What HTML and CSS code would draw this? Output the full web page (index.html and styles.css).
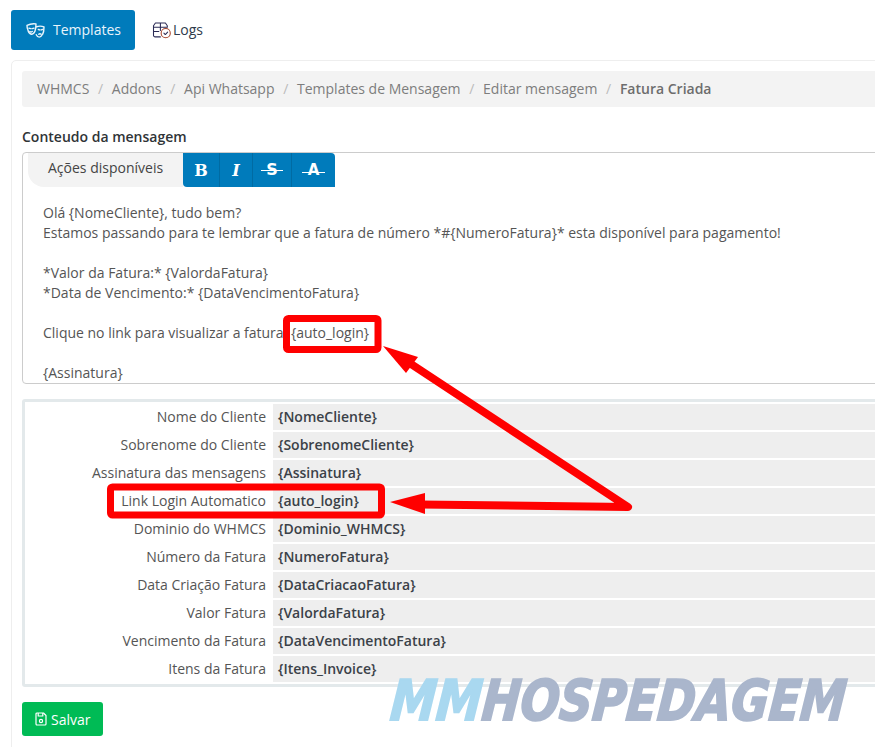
FILE: index.html
```html
<!DOCTYPE html>
<html lang="pt-BR">
<head>
<meta charset="utf-8">
<title>Fatura Criada</title>
<link rel="stylesheet" href="styles.css">
</head>
<body>
<div class="page">
  <nav class="tabs">
    <a class="tab tab-active">
      <svg class="tab-icon" viewBox="0 0 20 18" fill="none" stroke="currentColor" stroke-width="1.500" stroke-linejoin="round" stroke-linecap="round"><path d="M1 3.500c3-1.500 6-2 9.500-1.500 0 2 0 5-1 7.500-1 2.500-2.500 3.500-4 3.500-1.500-.5-3-2-3.500-4.500C1.200 7 1 5.500 1 3.500z"/><path d="M11 5c2.500-.8 5.500-.8 8 .2 0 3-.3 5.800-1.500 7.800-1 1.800-2.300 3-3.500 3-1.200 0-2.500-1-3.200-2.500"/><path d="M3 6.500l2 .5M6.500 7l2-.5M13 8l1.500.4M16 8.400l1.500-.4M4 10c.8.600 1.800.6 2.600 0M13.500 13c.6-.8 1.800-.8 2.500 0"/></svg>
      <span>Templates</span>
    </a>
    <a class="tab tab-plain">
      <svg class="tab-icon-logs" viewBox="0 0 18 16" fill="none" stroke-width="1" stroke-linecap="round" stroke-linejoin="round"><path stroke="#2b2b55" d="M7.500 14H2.500A1.500 1.500 0 0 1 1 12.500V3.500L2.800 1h9.400L14 3.500V5M1 5h13M7.500 1v7M1 9h5"/><circle stroke="#a5442c" cx="12.500" cy="10.500" r="4.300"/><path stroke="#2b2b55" d="M10.800 10.500l1.300 1.300 2.200-2.300"/></svg>
      <span>Logs</span>
    </a>
  </nav>

  <main class="card">
    <ol class="breadcrumb">
      <li>WHMCS</li>
      <li class="sep">/</li>
      <li>Addons</li>
      <li class="sep">/</li>
      <li>Api Whatsapp</li>
      <li class="sep">/</li>
      <li>Templates de Mensagem</li>
      <li class="sep">/</li>
      <li>Editar mensagem</li>
      <li class="sep">/</li>
      <li class="current">Fatura Criada</li>
    </ol>

    <h2 class="section-label">Conteudo da mensagem</h2>

    <section class="editor">
      <div class="toolbar">
        <div class="toolbar-title">Ações disponíveis</div>
        <div class="toolbar-buttons">
          <button class="tool tool-b">B</button>
          <button class="tool tool-i">I</button>
          <button class="tool tool-s"><span>S</span></button>
          <button class="tool tool-a"><span>A</span></button>
        </div>
      </div>
      <div class="editor-body">
        <p>Olá {NomeCliente}, tudo bem?</p>
        <p>Estamos passando para te lembrar que a fatura de número *#{NumeroFatura}* esta disponível para pagamento!</p>
        <p class="blank">&nbsp;</p>
        <p>*Valor da Fatura:* {ValordaFatura}</p>
        <p>*Data de Vencimento:* {DataVencimentoFatura}</p>
        <p class="blank">&nbsp;</p>
        <p>Clique no link para visualizar a fatura: {auto_login}</p>
        <p class="blank">&nbsp;</p>
        <p>{Assinatura}</p>
      </div>
    </section>

    <section class="vars">
      <div class="var-row"><div class="var-name">Nome do Cliente</div><div class="var-code">{NomeCliente}</div></div>
      <div class="var-row"><div class="var-name">Sobrenome do Cliente</div><div class="var-code">{SobrenomeCliente}</div></div>
      <div class="var-row"><div class="var-name">Assinatura das mensagens</div><div class="var-code">{Assinatura}</div></div>
      <div class="var-row"><div class="var-name">Link Login Automatico</div><div class="var-code">{auto_login}</div></div>
      <div class="var-row"><div class="var-name">Dominio do WHMCS</div><div class="var-code">{Dominio_WHMCS}</div></div>
      <div class="var-row"><div class="var-name">Número da Fatura</div><div class="var-code">{NumeroFatura}</div></div>
      <div class="var-row"><div class="var-name">Data Criação Fatura</div><div class="var-code">{DataCriacaoFatura}</div></div>
      <div class="var-row"><div class="var-name">Valor Fatura</div><div class="var-code">{ValordaFatura}</div></div>
      <div class="var-row"><div class="var-name">Vencimento da Fatura</div><div class="var-code">{DataVencimentoFatura}</div></div>
      <div class="var-row"><div class="var-name">Itens da Fatura</div><div class="var-code">{Itens_Invoice}</div></div>
    </section>

    <button class="save">
      <svg class="save-icon" viewBox="0 0 12 14" fill="none" stroke="currentColor" stroke-width="1.200" stroke-linejoin="round"><path d="M1 2a1 1 0 0 1 1-1h6.500L11 3.500V12a1 1 0 0 1-1 1H2a1 1 0 0 1-1-1z"/><path d="M3.200 1v3h4.600V1"/><circle cx="6" cy="9" r="1.600"/></svg>
      <span>Salvar</span>
    </button>
  </main>

  <svg class="annotations" viewBox="0 0 875 747" fill="none">
    <rect class="mark" x="286.500" y="318.500" width="91.500" height="31" rx="2"/>
    <rect class="mark" x="110.500" y="487" width="271" height="28" rx="2"/>
    <polyline class="arrow-line" points="411,364 628,507 420,504.500"/>
    <polygon class="arrow-head" points="383,346 418,357 406,373"/>
    <polygon class="arrow-head" points="390,502 425,493 425,514"/>
  </svg>

  <div class="watermark"><span class="wm-mm">MM</span><span class="wm-host">HOSPEDAGEM</span></div>
</div>
</body>
</html>
```

FILE: styles.css
```css
* { box-sizing: border-box; }

html, body {
  margin: 0;
  padding: 0;
  background: #fff;
}

body {
  font-family: "Open Sans", "Noto Sans", sans-serif;
  font-size: 14px;
  line-height: 20px;
  color: #555;
}

.page {
  position: relative;
  width: 875px;
  height: 747px;
  overflow: hidden;
  padding: 10px 0 0 11px;
}

.tabs {
  display: flex;
  height: 40px;
  margin-bottom: 10px;
}

.tab {
  display: flex;
  align-items: center;
  border-radius: 3px;
}

.tab-active {
  width: 124px;
  padding-left: 15px;
  gap: 8px;
  background: #007bbb;
  color: #e8f4fb;
}

.tab-plain {
  padding-left: 17px;
  gap: 1px;
  color: #2f3b4c;
}

.tab-icon { width: 19px; height: 17px; }
.tab-icon-logs { width: 20px; height: 17px; }

.card {
  width: 900px;
  height: 720px;
  padding: 10px 10px;
  border: 1px solid #eee;
  border-radius: 5px;
}

.breadcrumb {
  display: flex;
  align-items: center;
  height: 36px;
  margin: 0;
  padding: 0 0 0 15px;
  list-style: none;
  background: #f3f3f3;
  border-radius: 3px;
  color: #7d7d7d;
}

.breadcrumb .sep {
  padding: 0 8.700px;
  color: #bbb;
}

.breadcrumb .current {
  font-weight: 600;
  color: #6d6d6d;
}

.section-label {
  margin: 20px 0 5px;
  font-size: 14px;
  line-height: 20px;
  font-weight: 600;
  color: #2f3437;
}

.editor {
  height: 232px;
  border: 1px solid #ccc;
  border-radius: 4px 0 0 4px;
  overflow: hidden;
}

.toolbar {
  display: flex;
  height: 34px;
}

.toolbar-title {
  width: 155px;
  margin-left: 5px;
  padding: 5px 0 0 20px;
  background: #f3f3f3;
  border-bottom-left-radius: 16px;
  color: #444;
}

.toolbar-buttons {
  display: flex;
  background: #007bbb;
  border-radius: 0 4px 0 4px;
  overflow: hidden;
}

.tool {
  display: flex;
  align-items: center;
  justify-content: center;
  height: 34px;
  padding: 0;
  border: 0;
  border-right: 1px solid #006ba3;
  background: transparent;
  color: #fff;
  font-family: "DejaVu Serif", "Liberation Serif", serif;
  font-size: 16px;
  font-weight: 700;
}

.tool:last-child { border-right: 0; }

.tool-b { width: 37px; }
.tool-i { width: 33px; font-style: italic; }
.tool-s { width: 39px; font-family: "DejaVu Sans", sans-serif; }
.tool-a { width: 43px; font-family: "DejaVu Sans", sans-serif; font-size: 15px; }

.tool-s span, .tool-a span {
  position: relative;
  display: block;
  line-height: 18px;
}

.tool-s span::after, .tool-a span::after {
  content: "";
  position: absolute;
  left: -5px;
  right: -5px;
  top: 9px;
  height: 1px;
  background: #fff;
}

.tool-a span::after {
  left: -6px;
  right: -6px;
  top: 11px;
}

.editor-body {
  padding: 16px 20px 0;
  color: #555;
}

.editor-body p {
  margin: 0;
  white-space: nowrap;
}

.vars {
  margin-top: 15px;
  height: 288px;
  padding: 2px 0 0;
  border: 3px solid #e3e9eb;
  border-radius: 3px;
}

.var-row {
  display: flex;
  height: 28px;
}

.var-name {
  width: 248px;
  height: 26px;
  padding-right: 7px;
  line-height: 26px;
  text-align: right;
  color: #555;
}

.var-code {
  flex: 1;
  height: 26px;
  padding-left: 5px;
  line-height: 26px;
  background: #eee;
  font-weight: 600;
  color: #3b4148;
}

.save {
  display: flex;
  align-items: center;
  gap: 4px;
  width: 81px;
  height: 34px;
  margin-top: 15px;
  padding: 0 0 0 13px;
  border: 0;
  border-radius: 3px;
  background: #00bb55;
  color: #fff;
  font-family: inherit;
  font-size: 14px;
}

.save-icon { width: 12px; height: 14px; }

.annotations {
  position: absolute;
  left: 0;
  top: 0;
  width: 875px;
  height: 747px;
  pointer-events: none;
}

.mark {
  stroke: #f00;
  stroke-width: 7;
}

.arrow-line {
  stroke: #f00;
  stroke-width: 8;
  stroke-linejoin: round;
}

.arrow-head { fill: #f00; }

.watermark {
  position: absolute;
  left: 391px;
  top: 669px;
  font-family: "DejaVu Sans", "Liberation Sans", sans-serif;
  font-size: 56px;
  line-height: 64px;
  font-weight: 700;
  font-style: italic;
  white-space: nowrap;
  -webkit-text-stroke-width: 2px;
  transform-origin: left center;
  transform: scaleX(0.82) skewX(-6deg);
}

.wm-mm { color: #a9d8f0; -webkit-text-stroke-color: #a9d8f0; }
.wm-host { color: #aab6cc; -webkit-text-stroke-color: #aab6cc; }
```
